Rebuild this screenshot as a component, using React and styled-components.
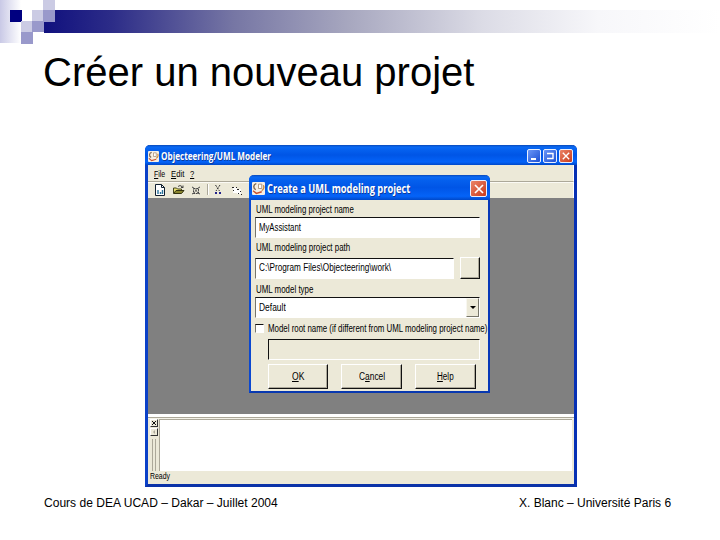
import React, { useLayoutEffect, useRef, useState } from "react";
import styled, { createGlobalStyle, css } from "styled-components";

const Global = createGlobalStyle`
  * { box-sizing: border-box; }
  body { margin: 0; background: #fff; overflow: hidden; }
`;

const Slide = styled.main`
  width: 720px;
  height: 540px;
  background: #fff;
  color: #000;
  font-family: "Liberation Sans", Arial, sans-serif;
  display: flex;
  flex-direction: column;
`;
const Banner = styled.header`
  height: 45px;
  flex: none;
  svg { display: block; }
`;
const Heading = styled.h1`
  margin: 0 0 0 43px;
  height: 100px;
  padding-top: 4px;
  font-size: 40px;
  line-height: 46px;
  font-weight: 400;
`;
const Footer = styled.footer`
  display: flex;
  justify-content: space-between;
  padding: 9px 49px 0 44px;
  font-size: 12px;
  line-height: 14px;
`;

const FitBox = styled.span`
  display: block;
  flex: none;
  width: ${(p) => p.$w}px;
  white-space: nowrap;
`;
const FitText = styled.span`
  display: inline-block;
  transform-origin: 0 50%;
  u { text-underline-offset: 1px; text-decoration-thickness: 1px; }
`;

/* Condenses or widens a line of text so that it fills a given width. */
function Fit({ w, children }) {
  const ref = useRef(null);
  const [k, setK] = useState(1);
  useLayoutEffect(() => {
    setK(w / ref.current.offsetWidth);
  }, [w]);
  return (
    <FitBox $w={w}>
      <FitText ref={ref} style={{ transform: `scaleX(${k})` }}>{children}</FitText>
    </FitBox>
  );
}

const Window = styled.section`
  position: relative;
  margin-left: 145px;
  width: 432px;
  height: 342px;
  flex: none;
  display: flex;
  flex-direction: column;
  background: #ece9d8;
  border: 3px solid #0b41c8;
  border-right-color: #0630b4;
  border-bottom-color: #0a32a8;
  border-top: 0;
  border-radius: 5px 5px 0 0;
  font-size: 9.5px;
`;
const TitleBar = styled.div`
  height: ${(p) => p.$h}px;
  flex: none;
  margin: 0 -${(p) => p.$bleed}px;
  padding: 2px ${(p) => p.$pr}px 0 3px;
  display: flex;
  align-items: center;
  gap: 2px;
  border-radius: 5px 5px 0 0;
  background: linear-gradient(#0a49b8 0, #0a6af4 2px, #0560ee 5px, #0055e6 50%, #0463f8 85%, #0048c8 100%);
  color: #fff;
  font-family: "Open Sans", "Noto Sans", sans-serif;
  font-weight: 700;
  font-size: ${(p) => p.$size}px;
  line-height: 14px;
  text-shadow: 1px 1px 0 #0a3a9c;
  svg { flex: none; display: block; }
`;
const Caption = styled.div`
  display: flex;
  gap: 2px;
  margin-left: auto;
`;
const CaptionButton = styled.span`
  width: ${(p) => p.$s || 14}px;
  height: ${(p) => p.$s || 14}px;
  border: 1px solid #eaf0ff;
  border-radius: 2px;
  background: ${(p) => (p.$close ? "linear-gradient(135deg,#eb8468,#c93b1c)" : "linear-gradient(135deg,#6b96f6,#1c50d4)")};
  display: flex;
  align-items: center;
  justify-content: center;
`;
const MenuBar = styled.nav`
  height: 17px;
  flex: none;
  display: flex;
  align-items: center;
  gap: 6px;
  padding-left: 6px;
  border-right: 1px solid #fff;
  border-bottom: 1px solid #aca899;
`;
const ToolBar = styled.div`
  height: 16px;
  flex: none;
  border-top: 1px solid #fbfaf4;
  border-right: 1px solid #fff;
  padding-left: 6px;
  svg { display: block; }
`;
const Workspace = styled.div`
  height: 216px;
  flex: none;
  background: #808080;
`;
const Splitter = styled.div`
  height: 4px;
  flex: none;
  background: #ece9d8;
  border-top: 3px solid #fff;
  border-bottom: 1px solid #aca899;
`;
const Console = styled.div`
  height: 53px;
  flex: none;
  display: flex;
  border-top: 1px solid #f4f2e8;
`;
const Gutter = styled.div`
  width: 11px;
  display: flex;
  flex-direction: column;
  align-items: center;
`;
const MiniButton = styled.span`
  width: 8px;
  height: 8px;
  margin-bottom: 1px;
  border: 1px solid #fff;
  border-right-color: #333;
  border-bottom-color: #333;
  svg { display: block; }
`;
const Grip = styled.span`
  width: 4px;
  flex: 1;
  margin-top: 2px;
  border: 1px solid #aca899;
  border-width: 0 1px;
`;
const Output = styled.div`
  flex: 1;
  margin-right: 2px;
  background: #fff;
  border-left: 1px solid #aca899;
  border-top: 1px solid #aca899;
`;
const Status = styled.div`
  padding: 0 0 0 2px;
  font-size: 9px;
  line-height: 11px;
`;

const Dialog = styled.section`
  position: absolute;
  left: 101px;
  top: 30px;
  width: 241px;
  height: 218px;
  background: #ece9d8;
  border: 2px solid #0b48d0;
  border-right-color: #0838b8;
  border-bottom-color: #0838b0;
  border-top: 0;
  border-radius: 5px 5px 0 0;
`;
const Form = styled.div`
  padding: 5px 0 0 4px;
  display: flex;
  flex-direction: column;
  font-size: 10px;
`;
const Label = styled.div`
  height: ${(p) => p.$h}px;
  line-height: 10px;
  padding-left: 1px;
`;
const PathRow = styled.div`
  display: flex;
  align-items: center;
  gap: 6px;
  margin-bottom: 6px;
`;
const RootNameRow = styled.div`
  display: flex;
  align-items: center;
  gap: 4px;
  height: 21px;
  line-height: 10px;
`;
const Buttons = styled.div`
  display: flex;
  gap: 13px;
  margin: 4px 0 0 13px;
`;
const sunken = css`
  border-top: 1px solid #111;
  border-left: 1px solid #77756a;
  border-right: 1px solid #fff;
  border-bottom: 1px solid #fff;
`;
const Field = styled.div`
  ${sunken}
  width: ${(p) => p.$w}px;
  height: 21px;
  margin-bottom: ${(p) => p.$mb || 0}px;
  background: #fff;
  padding-left: 3px;
  display: flex;
  align-items: center;
  line-height: 12px;
`;
const DisabledField = styled(Field)`
  margin-left: 13px;
  background: #ece9d8;
  border-left-color: #111;
`;
const Arrow = styled.span`
  width: 13px;
  height: 100%;
  margin-left: auto;
  background: #ece9d8;
  border: 1px solid #f8f7f0;
  border-right-color: #77756a;
  border-bottom-color: #77756a;
  display: flex;
  align-items: center;
  justify-content: center;
`;
const Check = styled.span`
  ${sunken}
  width: 9px;
  height: 9px;
  background: #fff;
`;
const Button = styled.div`
  width: ${(p) => p.$w}px;
  height: ${(p) => p.$h}px;
  background: #ece9d8;
  border: 1px solid #fff;
  border-right-color: #111;
  border-bottom-color: #111;
  box-shadow: inset -1px -1px 0 #aca899;
  display: flex;
  align-items: center;
  justify-content: center;
  line-height: 12px;
`;

const AppIcon = ({ s }) => (
  <svg width={s} height={s} viewBox="0 0 12 12">
    <rect width="12" height="12" rx="1" fill="#f6efe4" />
    <path d="M4 1.500C1 2 1 6 3.500 7" fill="none" stroke="#7d6650" strokeWidth="1.300" />
    <path d="M6 2h3v4H6z" fill="#fff" stroke="#a48a70" strokeWidth=".8" />
    <path d="M10.500 3c1 2 0 4-1.500 5" fill="none" stroke="#c98a38" strokeWidth="1.200" />
    <path d="M1 8l3 2.500 5-1.500" fill="none" stroke="#c8502c" strokeWidth="1.300" />
  </svg>
);
const Cross = ({ s }) => (
  <svg width={s} height={s} viewBox="0 0 10 10">
    <path d="M1 1l8 8M9 1L1 9" stroke="#fff" strokeWidth="1.7" />
  </svg>
);

const Tools = () => (
  <svg width="96" height="15" viewBox="154 183 96 15">
    <path d="M155.500 184.500h6l3 3v8h-9z" fill="#fff" stroke="#102030" />
    <path d="M161.500 184.500v3h3" fill="none" stroke="#102030" />
    <path d="M158 194v-4M160.500 194v-2M162.500 194v-4" stroke="#28729a" strokeWidth="1.400" />
    <path d="M173.500 193v-5h3l1 1h4v2" fill="#e8e070" stroke="#444420" />
    <path d="M173.500 193.500l2.500-3h8l-2.500 3z" fill="#8b8730" stroke="#333310" />
    <path d="M178 186.500q2-2 4 0l1 1m0-2v2h-2" fill="none" stroke="#222" strokeWidth=".8" />
    <path d="M192 187l2 1M200 187l-2 1M192 194l2-1M200 194l-2-1M193.500 188.500h5v5h-5zM194 188l4 5M198 188l-4 5" fill="none" stroke="#444" strokeDasharray="2 .7" />
    <path d="M207.500 184v11" stroke="#aca899" />
    <path d="M208.500 184v11" stroke="#fff" />
    <path d="M215.500 185l4 6M220 185l-4 6" stroke="#333" strokeDasharray="2 1" />
    <path d="M215 193h2M219 193h2" stroke="#24248c" strokeWidth="2" />
    <path d="M233 187l4 1v5h-4z" fill="#fff" />
    <path d="M237 189h4v5h-4z" fill="#fff" />
    <path d="M232 187.500h2M236 187.500h1M233 190.500h1M237 189.500h2M240 191.500h1M238 193.500h1M241 194.500h1" stroke="#222" />
  </svg>
);

export default function App() {
  return (
    <Slide>
      <Global />
      <Banner>
        <svg width="720" height="45">
          <defs>
            <linearGradient id="bar" gradientUnits="userSpaceOnUse" x1="44" x2="720" y1="0" y2="0">
              <stop offset="0" stopColor="#10107e" />
              <stop offset=".1" stopColor="#2c2c88" />
              <stop offset=".28" stopColor="#7676a4" />
              <stop offset=".45" stopColor="#a7a7bf" />
              <stop offset=".65" stopColor="#dcdce6" />
              <stop offset=".82" stopColor="#f7f7fa" />
              <stop offset="1" stopColor="#fff" />
            </linearGradient>
            <linearGradient id="fade">
              <stop offset="0" stopColor="#c9c9e6" />
              <stop offset="1" stopColor="#fff" />
            </linearGradient>
          </defs>
          <path d="M0 0h21v43H0z" fill="url(#fade)" />
          <path d="M44 10h676v23H44z" fill="url(#bar)" />
          <path d="M10 10h12v12H10z" fill="#000080" />
          <path d="M43 0h12v10H43zM32 10h11v11H32zM21 21h11v11H21z" fill="#cbcbe4" />
          <path d="M43 10h12v12H43zM32 21h12v11H32zM21 32h12v12H21z" fill="#9999cb" />
        </svg>
      </Banner>
      <Heading><Fit w={431}>Créer un nouveau projet</Fit></Heading>

      <Window>
        <TitleBar $h={20} $bleed={3} $pr={4} $size={10}>
          <AppIcon s={11} />
          <Fit w={110}>Objecteering/UML Modeler</Fit>
          <Caption>
            <CaptionButton>
              <svg width="10" height="10"><path d="M2 8h5" stroke="#fff" strokeWidth="2" /></svg>
            </CaptionButton>
            <CaptionButton>
              <svg width="10" height="10"><path d="M2 2.500h6v5H2" fill="none" stroke="#fff" strokeWidth="1.400" /></svg>
            </CaptionButton>
            <CaptionButton $close><Cross s={8} /></CaptionButton>
          </Caption>
        </TitleBar>
        <MenuBar>
          <Fit w={11}><u>F</u>ile</Fit>
          <Fit w={13}><u>E</u>dit</Fit>
          <Fit w={4}><u>?</u></Fit>
        </MenuBar>
        <ToolBar><Tools /></ToolBar>
        <Workspace />
        <Splitter />
        <Console>
          <Gutter>
            <MiniButton><svg width="6" height="6"><path d="M1 1l4 4M5 1L1 5" stroke="#111" /></svg></MiniButton>
            <MiniButton><svg width="6" height="6"><path d="M4 1v4L2 3z" fill="#aca899" /></svg></MiniButton>
            <Grip />
          </Gutter>
          <Output />
        </Console>
        <Status><Fit w={20}>Ready</Fit></Status>

        <Dialog>
          <TitleBar $h={25} $bleed={2} $pr={3} $size={11.5}>
            <AppIcon s={13} />
            <Fit w={143}>Create a UML modeling project</Fit>
            <Caption><CaptionButton $close $s={17}><Cross s={10} /></CaptionButton></Caption>
          </TitleBar>
          <Form>
            <Label $h={12}><Fit w={98}>UML modeling project name</Fit></Label>
            <Field $w={225} $mb={5}><Fit w={42}>MyAssistant</Fit></Field>
            <Label $h={14}><Fit w={94}>UML modeling project path</Fit></Label>
            <PathRow>
              <Field $w={199}><Fit w={132}>C:\Program Files\Objecteering\work\</Fit></Field>
              <Button $w={20} $h={22} />
            </PathRow>
            <Label $h={12}><Fit w={57}>UML model type</Fit></Label>
            <Field $w={225}>
              <Fit w={27}>Default</Fit>
              <Arrow><svg width="6" height="3"><path d="M0 0h6L3 3z" fill="#000" /></svg></Arrow>
            </Field>
            <RootNameRow>
              <Check />
              <Fit w={219}>Model root name (if different from UML modeling project name)</Fit>
            </RootNameRow>
            <DisabledField $w={212} />
            <Buttons>
              <Button $w={60} $h={25}><Fit w={12}><u>O</u>K</Fit></Button>
              <Button $w={61} $h={25}><Fit w={26}>C<u>a</u>ncel</Fit></Button>
              <Button $w={61} $h={25}><Fit w={17}><u>H</u>elp</Fit></Button>
            </Buttons>
          </Form>
        </Dialog>
      </Window>

      <Footer>
        <Fit w={234}>Cours de DEA UCAD – Dakar – Juillet 2004</Fit>
        <Fit w={152}>X. Blanc – Université Paris 6</Fit>
      </Footer>
    </Slide>
  );
}
